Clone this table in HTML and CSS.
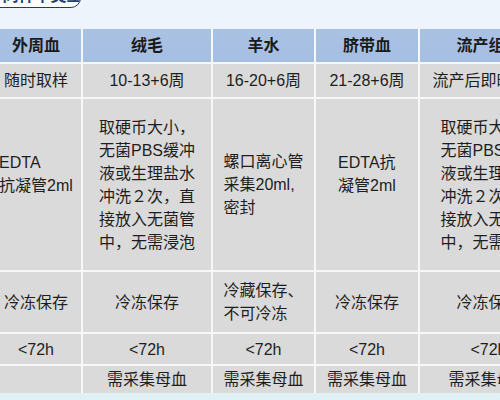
FILE: index.html
```html
<!DOCTYPE html>
<html lang="zh-CN">
<head>
<meta charset="utf-8">
<title>样本采集</title>
<link rel="stylesheet" href="styles.css">
</head>
<body>
<div class="page">
  <div class="title-pill"><span class="title-text">不同样本类型</span></div>
  <div class="grid">
    <div class="cell head">外周血</div>
    <div class="cell head">绒毛</div>
    <div class="cell head">羊水</div>
    <div class="cell head">脐带血</div>
    <div class="cell head">流产组织</div>

    <div class="cell">随时取样</div>
    <div class="cell">10-13+6周</div>
    <div class="cell">16-20+6周</div>
    <div class="cell">21-28+6周</div>
    <div class="cell">流产后即时取样</div>

    <div class="cell"><div class="block lift">EDTA<br>抗凝管2ml</div></div>
    <div class="cell"><div class="block">取硬币大小，<br>无菌PBS缓冲<br>液或生理盐水<br>冲洗２次，直<br>接放入无菌管<br>中，无需浸泡</div></div>
    <div class="cell"><div class="block">螺口离心管<br>采集20ml,<br>密封</div></div>
    <div class="cell"><div class="block lift">EDTA抗<br>凝管2ml</div></div>
    <div class="cell"><div class="block">取硬币大小，<br>无菌PBS缓冲<br>液或生理盐水<br>冲洗２次，直<br>接放入无菌管<br>中，无需浸泡</div></div>

    <div class="cell">冷冻保存</div>
    <div class="cell">冷冻保存</div>
    <div class="cell"><div class="block">冷藏保存、<br>不可冷冻</div></div>
    <div class="cell">冷冻保存</div>
    <div class="cell">冷冻保存</div>

    <div class="cell">&lt;72h</div>
    <div class="cell">&lt;72h</div>
    <div class="cell">&lt;72h</div>
    <div class="cell">&lt;72h</div>
    <div class="cell">&lt;72h</div>

    <div class="cell"></div>
    <div class="cell">需采集母血</div>
    <div class="cell">需采集母血</div>
    <div class="cell">需采集母血</div>
    <div class="cell">需采集母血</div>
  </div>
</div>
</body>
</html>
```

FILE: styles.css
```css
html, body {
  margin: 0;
  padding: 0;
  width: 500px;
  height: 400px;
  overflow: hidden;
}

body {
  background: linear-gradient(180deg, #eef4fb 0%, #edf4fa 90%, #def1f5 100%);
  font-family: "Liberation Sans", "Noto Sans CJK SC", sans-serif;
  color: #1e1e1e;
}

.page {
  display: flex;
  flex-direction: column;
  align-items: flex-start;
}

.title-pill {
  margin-top: -18px;
  margin-left: -12px;
  width: 93px;
  height: 26px;
  box-sizing: border-box;
  background: #ffffff;
  border: 1.5px solid #2b3a57;
  border-radius: 0 0 10px 0;
  display: flex;
  align-items: flex-end;
  justify-content: center;
  overflow: hidden;
}

.title-text {
  font-size: 16px;
  font-weight: bold;
  color: #22406e;
  line-height: 16px;
  margin-bottom: 3px;
  white-space: nowrap;
}

.grid {
  margin-top: 21px;
  margin-left: -9px;
  display: grid;
  grid-template-columns: 90px 128px 101px 102px 137px;
  grid-template-rows: 33px 33px 171px 60px 30px 27px;
  gap: 2px;
  background: #f6f7f8;
}

.cell {
  background: #dadada;
  display: flex;
  align-items: center;
  justify-content: center;
  font-size: 16px;
  line-height: 23px;
  white-space: nowrap;
  overflow: hidden;
}

.cell.head {
  background: linear-gradient(180deg, #a9c1e3 0%, #a6bee1 100%);
  font-weight: bold;
  color: #1a1a1a;
}

.block {
  text-align: left;
}

.block.lift {
  padding-bottom: 22px;
}
```
